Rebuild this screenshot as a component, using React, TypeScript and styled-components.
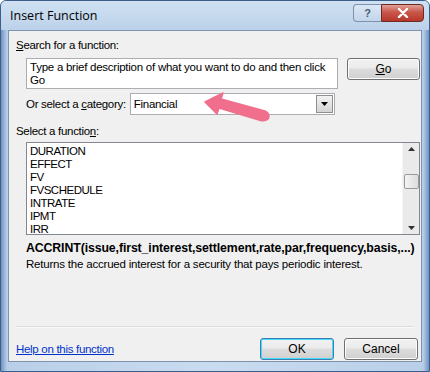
import React from "react";
import styled, { createGlobalStyle } from "styled-components";

const Global = createGlobalStyle`
	html, body {
		margin: 0;
		padding: 0;
		background: #ffffff;
	}
	body {
		width: 430px;
		height: 372px;
		overflow: hidden;
		font-family: "Liberation Sans", Arial, sans-serif;
	}
`;

const Window = styled.div`
	position: relative;
	width: 430px;
	height: 372px;
	box-sizing: border-box;
	display: flex;
	flex-direction: column;
	border: 1px solid #3e5e8a;
	border-radius: 6px 6px 0 0;
	background: linear-gradient(90deg, #6f93c2 0px, #b9cfe9 6px, #c9dbef 50%, #b9cfe9 calc(100% - 6px), #6f93c2 100%);
	overflow: hidden;
`;

const TitleBar = styled.div`
	height: 29px;
	display: flex;
	align-items: flex-start;
	justify-content: space-between;
	background: linear-gradient(180deg, #cfe0f2 0%, #bcd2ea 100%);
`;

const Title = styled.div`
	font-family: "Open Sans", "Liberation Sans", sans-serif;
	font-size: 12.5px;
	color: #000;
	padding: 6px 0 0 9px;
`;

const Controls = styled.div`
	display: flex;
	margin: 3px 5px 0 0;
`;

const HelpButton = styled.div`
	width: 28px;
	height: 18px;
	box-sizing: border-box;
	border: 1px solid #7e92ac;
	border-right: none;
	border-radius: 4px 0 0 4px;
	background: linear-gradient(180deg, #dbe7f4, #c2d5ea);
	display: flex;
	align-items: center;
	justify-content: center;
	font-family: "Liberation Sans", sans-serif;
	font-weight: bold;
	font-size: 11px;
	color: #4b5b70;
`;

const CloseButton = styled.div`
	width: 43px;
	height: 18px;
	box-sizing: border-box;
	border: 1px solid #6d2a22;
	border-radius: 0 4px 4px 0;
	background: linear-gradient(180deg, #e0a196 0%, #c9564a 45%, #b7382a 100%);
	display: flex;
	align-items: center;
	justify-content: center;
`;

const Client = styled.div`
	flex: 1;
	margin: 0 7px 9px 7px;
	border: 1px solid #7f93ad;
	background: #f0f0f0;
	display: flex;
	flex-direction: column;
	padding: 7px 3px 0 7px;
	font-size: 11.5px;
	letter-spacing: -0.3px;
	color: #000;
`;

const Label = styled.div`
	font-size: 11.5px;
	height: 14px;
	line-height: 14px;
	white-space: nowrap;
`;

const Key = styled.span`
	text-decoration: underline;
`;

const Indent = styled.div`
	margin-left: 10px;
`;

const SearchRow = styled(Indent)`
	display: grid;
	grid-template-columns: 312px 73px;
	gap: 9px;
	margin-top: 6px;
	align-items: start;
`;

const SearchBox = styled.div`
	height: 31px;
	box-sizing: border-box;
	border: 1px solid #abadb3;
	background: #fff;
	padding: 2px 3px;
	font-size: 11.5px;
	letter-spacing: -0.25px;
	line-height: 13px;
`;

const Button = styled.div<{ $default?: boolean }>`
	height: 22px;
	box-sizing: border-box;
	border: 1px solid ${(p) => (p.$default ? "#3c7fb1" : "#707070")};
	border-radius: 3px;
	background: linear-gradient(180deg, #f2f2f2 0%, #ebebeb 45%, #dddddd 50%, #cfcfcf 100%);
	box-shadow: ${(p) => (p.$default ? "inset 0 0 0 1px #48d8fb" : "inset 0 0 0 1px #fcfcfc")};
	display: flex;
	align-items: center;
	justify-content: center;
	font-size: 12px;
	letter-spacing: 0;
`;

const CategoryRow = styled(Indent)`
	display: flex;
	align-items: center;
	gap: 4px;
	margin-top: 4px;
	margin-bottom: 9px;
`;

const Select = styled.div`
	width: 205px;
	height: 22px;
	box-sizing: border-box;
	border: 1px solid #abadb3;
	background: #fff;
	display: flex;
	align-items: center;
	justify-content: space-between;
	padding-left: 3px;
`;

const DropArrow = styled.div`
	width: 17px;
	height: 18px;
	margin-right: 1px;
	box-sizing: border-box;
	border: 1px solid #8f8f8f;
	background: linear-gradient(180deg, #f2f2f2, #d4d4d4);
	display: flex;
	align-items: center;
	justify-content: center;
`;

const ListBox = styled(Indent)`
	margin-top: 4px;
	height: 93px;
	width: 394px;
	box-sizing: border-box;
	border: 1px solid #828790;
	background: #fff;
	display: flex;
	overflow: hidden;
`;

const Items = styled.div`
	flex: 1;
	padding: 2px 3px;
`;

const Item = styled.div`
	height: 13px;
	line-height: 13px;
	font-size: 11.5px;
	letter-spacing: -0.5px;
`;

const ScrollBar = styled.div`
	width: 17px;
	background: #eaeaea;
	border-left: 1px solid #f5f5f5;
	display: flex;
	flex-direction: column;
	align-items: center;
	justify-content: space-between;
	padding: 4px 0;
	box-sizing: border-box;
`;

const Thumb = styled.div`
	width: 15px;
	height: 15px;
	box-sizing: border-box;
	border: 1px solid #9a9a9a;
	border-radius: 2px;
	background: linear-gradient(90deg, #f4f4f4, #dcdcdc);
	margin-top: -14px;
`;

const Signature = styled(Indent)`
	margin-top: 6px;
	font-weight: bold;
	font-size: 12.3px;
	letter-spacing: -0.1px;
	line-height: 15px;
	white-space: nowrap;
`;

const Description = styled(Indent)`
	margin-top: 1px;
	font-size: 11.5px;
	letter-spacing: -0.2px;
	line-height: 14px;
`;

const Spacer = styled.div`
	flex: 1;
`;

const Separator = styled.div`
	height: 1px;
	background: #dcdcdc;
	border-bottom: 1px solid #fafafa;
	margin-right: 4px;
`;

const Footer = styled.div`
	display: flex;
	align-items: center;
	margin-top: 10px;
	margin-bottom: 1px;
`;

const HelpLink = styled.a`
	color: #0033cc;
	text-decoration: underline;
	font-size: 11.5px;
	letter-spacing: -0.3px;
	flex: 1;
`;

const FooterButton = styled(Button)`
	width: 74px;
	margin-left: 10px;
`;

const Pointer = styled.svg`
	position: absolute;
	left: 200px;
	top: 88px;
`;

const functions = ["DURATION", "EFFECT", "FV", "FVSCHEDULE", "INTRATE", "IPMT", "IRR"];

export default function App() {
	return (
		<>
			<Global />
			<Window>
				<TitleBar>
					<Title>Insert Function</Title>
					<Controls>
						<HelpButton>?</HelpButton>
						<CloseButton>
							<svg width="12" height="10" viewBox="0 0 12 10">
								<path d="M2 1 L10 9 M10 1 L2 9" stroke="#fff" strokeWidth="2.4" strokeLinecap="round" />
							</svg>
						</CloseButton>
					</Controls>
				</TitleBar>
				<Client>
					<Label>
						<Key>S</Key>earch for a function:
					</Label>
					<SearchRow>
						<SearchBox>
							Type a brief description of what you want to do and then click Go
						</SearchBox>
						<Button>
							<Key>G</Key>o
						</Button>
					</SearchRow>
					<CategoryRow>
						<Label>
							Or select a <Key>c</Key>ategory:
						</Label>
						<Select>
							<span>Financial</span>
							<DropArrow>
								<svg width="7" height="4" viewBox="0 0 7 4">
									<path d="M0 0 H7 L3.5 4 Z" fill="#000" />
								</svg>
							</DropArrow>
						</Select>
					</CategoryRow>
					<Label>
						Select a functio<Key>n</Key>:
					</Label>
					<ListBox>
						<Items>
							{functions.map((f) => (
								<Item key={f}>{f}</Item>
							))}
						</Items>
						<ScrollBar>
							<svg width="7" height="4" viewBox="0 0 7 4">
								<path d="M0 4 H7 L3.5 0 Z" fill="#333" />
							</svg>
							<Thumb />
							<svg width="7" height="4" viewBox="0 0 7 4">
								<path d="M0 0 H7 L3.5 4 Z" fill="#333" />
							</svg>
						</ScrollBar>
					</ListBox>
					<Signature>ACCRINT(issue,first_interest,settlement,rate,par,frequency,basis,...)</Signature>
					<Description>Returns the accrued interest for a security that pays periodic interest.</Description>
					<Spacer />
					<Separator />
					<Footer>
						<HelpLink href="#">Help on this function</HelpLink>
						<FooterButton $default>OK</FooterButton>
						<FooterButton>Cancel</FooterButton>
					</Footer>
				</Client>
				<Pointer width="72" height="36" viewBox="0 0 72 36">
					<path
						d="M4 13 L22 4 L20 10 L64 22 Q70 25 67 30 Q64 33 58 31 L18 19 L16 25 Z"
						fill="#f06f8d"
						stroke="#f06f8d"
						strokeWidth="1.5"
						strokeLinejoin="round"
					/>
				</Pointer>
			</Window>
		</>
	);
}
